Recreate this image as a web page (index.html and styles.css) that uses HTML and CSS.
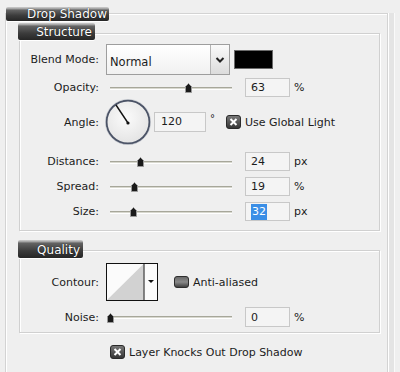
FILE: index.html
```html
<!DOCTYPE html>
<html>
<head>
<meta charset="utf-8">
<link rel="stylesheet" href="styles.css">
</head>
<body>
<div class="panel">
  <div class="tab tab-main">Drop Shadow</div>
  <div class="group group-structure">
    <div class="tab tab-structure">Structure</div>

    <div class="row row-blend">
      <div class="label">Blend Mode:</div>
      <div class="select">
        <span class="select-text">Normal</span>
        <span class="select-arrow">
          <svg width="10" height="8" viewBox="0 0 10 8"><path d="M1.5 2 L5 5.5 L8.5 2" fill="none" stroke="#222" stroke-width="2"/></svg>
        </span>
      </div>
      <div class="swatch"></div>
    </div>

    <div class="row row-field row-opacity">
      <div class="label">Opacity:</div>
      <div class="slider"><div class="track"></div><svg class="thumb" style="left:78px" width="7" height="10" viewBox="0 0 7 10"><path d="M3.5 0.5 L6.5 3.5 V9.5 H0.5 V3.5 Z" fill="#1a1a1a" stroke="#9a9a9a" stroke-width="1"/></svg></div>
      <div class="input">63</div>
      <div class="unit">%</div>
    </div>

    <div class="row row-angle">
      <div class="label">Angle:</div>
      <svg class="dial" width="46" height="46" viewBox="0 0 46 46">
        <defs>
          <radialGradient id="dg" cx="0.45" cy="0.4" r="0.6">
            <stop offset="0" stop-color="#fbfbfb"/>
            <stop offset="1" stop-color="#e4e4e4"/>
          </radialGradient>
        </defs>
        <circle cx="23" cy="23" r="21.5" fill="url(#dg)" stroke="#4b5366" stroke-width="2"/>
        <circle cx="23" cy="23" r="22.7" fill="none" stroke="#c9ccd4" stroke-width="0.6"/>
        <line x1="23" y1="24" x2="11" y2="6" stroke="#111" stroke-width="1.4"/>
        <circle cx="23" cy="24" r="1.6" fill="#111"/>
      </svg>
      <div class="input input-angle">120</div>
      <div class="deg">°</div>
      <svg class="check check-angle" width="15" height="14" viewBox="0 0 15 14">
        <defs>
          <linearGradient id="cg" x1="0" y1="0" x2="0" y2="1">
            <stop offset="0" stop-color="#7a7a7a"/>
            <stop offset="1" stop-color="#333"/>
          </linearGradient>
        </defs>
        <rect x="0.5" y="0.5" width="14" height="13" rx="2.5" fill="url(#cg)" stroke="#2a2a2a"/>
        <path d="M4.5 4 L10.5 10 M10.5 4 L4.5 10" stroke="#fff" stroke-width="2"/>
      </svg>
      <div class="check-label">Use Global Light</div>
    </div>

    <div class="row row-field row-distance">
      <div class="label">Distance:</div>
      <div class="slider"><div class="track"></div><svg class="thumb" style="left:30px" width="7" height="10" viewBox="0 0 7 10"><path d="M3.5 0.5 L6.5 3.5 V9.5 H0.5 V3.5 Z" fill="#1a1a1a" stroke="#9a9a9a" stroke-width="1"/></svg></div>
      <div class="input">24</div>
      <div class="unit">px</div>
    </div>

    <div class="row row-field row-next">
      <div class="label">Spread:</div>
      <div class="slider"><div class="track"></div><svg class="thumb" style="left:24px" width="7" height="10" viewBox="0 0 7 10"><path d="M3.5 0.5 L6.5 3.5 V9.5 H0.5 V3.5 Z" fill="#1a1a1a" stroke="#9a9a9a" stroke-width="1"/></svg></div>
      <div class="input">19</div>
      <div class="unit">%</div>
    </div>

    <div class="row row-field row-next">
      <div class="label">Size:</div>
      <div class="slider"><div class="track"></div><svg class="thumb" style="left:23px" width="7" height="10" viewBox="0 0 7 10"><path d="M3.5 0.5 L6.5 3.5 V9.5 H0.5 V3.5 Z" fill="#1a1a1a" stroke="#9a9a9a" stroke-width="1"/></svg></div>
      <div class="input"><span class="selected">32</span></div>
      <div class="unit">px</div>
    </div>
  </div>

  <div class="group group-quality">
    <div class="tab tab-quality">Quality</div>

    <div class="row row-contour">
      <div class="label">Contour:</div>
      <svg class="contour" width="52" height="38" viewBox="0 0 52 38">
        <rect x="0.5" y="0.5" width="51" height="37" fill="#fbfbfb" stroke="#111"/>
        <polygon points="1,37 37.5,1 37.5,37" fill="#d2d2d2"/>
        <line x1="38" y1="0.5" x2="38" y2="37.5" stroke="#111"/>
        <polygon points="42,17 48,17 45,20" fill="#111"/>
      </svg>
      <svg class="check check-aa" width="15" height="12" viewBox="0 0 15 12">
        <defs>
          <linearGradient id="ug" x1="0" y1="0" x2="0" y2="1">
            <stop offset="0" stop-color="#666"/>
            <stop offset="0.5" stop-color="#8a8a8a"/>
            <stop offset="1" stop-color="#3a3a3a"/>
          </linearGradient>
        </defs>
        <rect x="0.5" y="0.5" width="14" height="11" rx="2.5" fill="url(#ug)" stroke="#2e2e2e"/>
      </svg>
      <div class="check-label">Anti-aliased</div>
    </div>

    <div class="row row-field row-noise">
      <div class="label">Noise:</div>
      <div class="slider"><div class="track"></div><svg class="thumb" style="left:0px" width="7" height="10" viewBox="0 0 7 10"><path d="M3.5 0.5 L6.5 3.5 V9.5 H0.5 V3.5 Z" fill="#1a1a1a" stroke="#9a9a9a" stroke-width="1"/></svg></div>
      <div class="input">0</div>
      <div class="unit">%</div>
    </div>
  </div>

  <div class="row row-knock">
    <svg class="check" width="15" height="14" viewBox="0 0 15 14">
      <rect x="0.5" y="0.5" width="14" height="13" rx="2.5" fill="url(#cg)" stroke="#2a2a2a"/>
      <path d="M4.5 4 L10.5 10 M10.5 4 L4.5 10" stroke="#fff" stroke-width="2"/>
    </svg>
    <div class="check-label">Layer Knocks Out Drop Shadow</div>
  </div>
</div>
</body>
</html>
```
FILE: styles.css
```css
* { box-sizing: border-box; }

html, body {
  height: 372px;
  overflow: hidden;
}

body {
  margin: 0;
  background: #efefef;
  font-family: "DejaVu Sans", sans-serif;
  font-size: 11px;
  color: #1c1c1c;
}

.panel {
  margin: 13px 12px 0 5px;
  height: 359px;
  border: 1px solid #d3d3d3;
  border-bottom: none;
  box-shadow: inset 1px 1px 0 #fff, 1px 0 0 #fff, 6px 0 0 #e4e4e4, 7px 0 0 #fafafa;
}

.tab {
  color: #fff;
  text-align: right;
  white-space: nowrap;
  background: linear-gradient(#cfcfcf 0, #9a9a9a 2px, #646464 3px, #3c3c3c 60%, #262626 100%);
  border-radius: 2px;
  text-shadow: 0 0 1px #000;
  box-shadow: 0 1px 0 #fff;
}

.tab-main {
  width: 103px;
  height: 14px;
  margin-top: -7px;
  font-size: 12px;
  line-height: 15px;
  padding-right: 2px;
}

.group {
  margin: 12px 7px 0 13px;
  border: 1px solid #d0d0d0;
  box-shadow: inset 1px 1px 0 #fff, 1px 1px 0 #fff;
}

.group-structure {
  padding-bottom: 9px;
}

.tab-structure {
  width: 77px;
  height: 17px;
  margin: -11px 0 0 -2px;
  font-size: 12px;
  line-height: 19px;
  padding-right: 3px;
}

.group-quality {
  margin-top: 19px;
  padding-bottom: 5px;
}

.tab-quality {
  width: 65px;
  height: 18px;
  margin: -11px 0 0 -2px;
  font-size: 12px;
  line-height: 20px;
  padding-right: 3px;
}

.row {
  display: flex;
  align-items: center;
}

.label {
  flex: none;
  width: 79px;
  margin-right: 7px;
  text-align: right;
}

.row-blend {
  margin-top: 4px;
  height: 31px;
}

.select {
  display: flex;
  width: 124px;
  height: 31px;
  border: 1px solid #9e9e9e;
  background: linear-gradient(#ffffff, #f1f1f1);
}

.select-text {
  flex: 1;
  padding: 10px 0 0 3px;
  font-size: 11.5px;
}

.select-arrow {
  display: flex;
  align-items: center;
  justify-content: center;
  width: 19px;
  border-left: 1px solid #b4b4b4;
  background: linear-gradient(#fafafa, #dcdcdc);
}

.swatch {
  margin-left: 4px;
  width: 39px;
  height: 19px;
  background: #000;
  border: 1px solid #6a6a6a;
}

.row-field {
  height: 19px;
}

.row-opacity { margin-top: 3px; }
.row-distance { margin-top: 7px; }
.row-next { margin-top: 6px; }
.row-noise { margin-top: 6px; height: 20px; }

.slider {
  position: relative;
  flex: none;
  width: 130px;
  height: 19px;
  display: flex;
  align-items: center;
}

.track {
  flex: 1;
  margin: 1px 4px 0;
  height: 3px;
  border-top: 1px solid #a7a79a;
  border-bottom: 1px solid #ffffff;
  background: #d8d8cf;
}

.thumb {
  position: absolute;
  top: 5px;
  margin-left: 1px;
}

.input {
  flex: none;
  margin-left: 9px;
  width: 45px;
  height: 19px;
  border: 1px solid #c8c8c8;
  background: #f4f4f4;
  padding-left: 5px;
  line-height: 18px;
}

.row-noise .input { height: 20px; line-height: 19px; }

.selected {
  background: #3a8ee6;
  color: #fff;
  padding: 1px 1px 2px;
}

.unit {
  margin-left: 4px;
}

.row-angle {
  margin-top: 2px;
  height: 46px;
}

.dial {
  flex: none;
  margin-left: -1px;
}

.input-angle {
  margin-left: 3px;
  width: 52px;
  height: 20px;
  padding-left: 6px;
}

.deg {
  margin-left: 4px;
  margin-bottom: 7px;
  font-size: 10px;
}

.check {
  flex: none;
}

.check-angle {
  margin-left: 11px;
}

.check-label {
  margin-left: 4px;
  white-space: nowrap;
}

.row-contour {
  margin-top: 5px;
  height: 38px;
}

.contour {
  flex: none;
}

.check-aa {
  margin-left: 16px;
}

.row-knock {
  margin: 12px 0 0 104px;
  height: 14px;
}
```
